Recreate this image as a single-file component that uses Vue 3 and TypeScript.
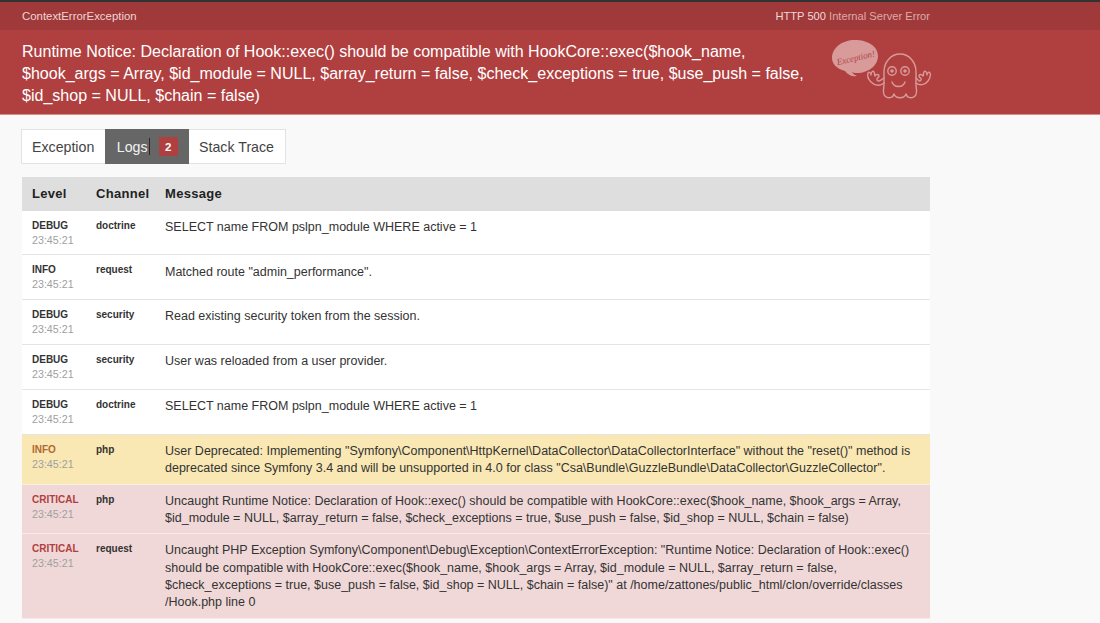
<script setup lang="ts">
interface LogRow {
  level: string
  time: string
  channel: string
  message: string[]
  kind: string
  height: number
}
const tabs = [
  { label: 'Exception', active: false, badge: '' },
  { label: 'Logs', active: true, badge: '2' },
  { label: 'Stack Trace', active: false, badge: '' },
]
const rows: LogRow[] = [
  { level: 'DEBUG', time: '23:45:21', channel: 'doctrine', message: ['SELECT name FROM pslpn_module WHERE active = 1'], kind: '', height: 44.8 },
  { level: 'INFO', time: '23:45:21', channel: 'request', message: ['Matched route "admin_performance".'], kind: '', height: 44.8 },
  { level: 'DEBUG', time: '23:45:21', channel: 'security', message: ['Read existing security token from the session.'], kind: '', height: 44.8 },
  { level: 'DEBUG', time: '23:45:21', channel: 'security', message: ['User was reloaded from a user provider.'], kind: '', height: 44.8 },
  { level: 'DEBUG', time: '23:45:21', channel: 'doctrine', message: ['SELECT name FROM pslpn_module WHERE active = 1'], kind: '', height: 44.8 },
  { level: 'INFO', time: '23:45:21', channel: 'php', message: ['User Deprecated: Implementing "Symfony\\Component\\HttpKernel\\DataCollector\\DataCollectorInterface" without the "reset()" method is', 'deprecated since Symfony 3.4 and will be unsupported in 4.0 for class "Csa\\Bundle\\GuzzleBundle\\DataCollector\\GuzzleCollector".'], kind: 'warn', height: 50 },
  { level: 'CRITICAL', time: '23:45:21', channel: 'php', message: ['Uncaught Runtime Notice: Declaration of Hook::exec() should be compatible with HookCore::exec($hook_name, $hook_args = Array,', '$id_module = NULL, $array_return = false, $check_exceptions = true, $use_push = false, $id_shop = NULL, $chain = false)'], kind: 'crit', height: 49.5 },
  { level: 'CRITICAL', time: '23:45:21', channel: 'request', message: ['Uncaught PHP Exception Symfony\\Component\\Debug\\Exception\\ContextErrorException: "Runtime Notice: Declaration of Hook::exec()', 'should be compatible with HookCore::exec($hook_name, $hook_args = Array, $id_module = NULL, $array_return = false,', '$check_exceptions = true, $use_push = false, $id_shop = NULL, $chain = false)" at /home/zattones/public_html/clon/override/classes', '/Hook.php line 0'], kind: 'crit', height: 85 },
]
</script>

<template>
  <div class="page">
    <div class="topbar">
      <span>ContextErrorException</span>
      <span class="status"><b>HTTP 500</b> Internal Server Error</span>
    </div>
    <header class="hero">
      <h1>Runtime Notice: Declaration of Hook::exec() should be compatible with HookCore::exec($hook_name,<br>$hook_args = Array, $id_module = NULL, $array_return = false, $check_exceptions = true, $use_push = false,<br>$id_shop = NULL, $chain = false)</h1>
      <svg class="ghost" width="102" height="62" viewBox="0 0 102 62" fill="none">
        <path d="M2 19C2 9 12 1 25 1c12 0 23 6 23 16 0 9-9 17-21 17-2 0-3 0-5-1 1 2 3 3 5 4-5 1-9-1-12-5C7 30 2 25 2 19Z" fill="#d99a9a"/>
        <text x="6" y="22" transform="rotate(-13 25 18)" font-family="Liberation Serif, serif" font-style="italic" font-size="9" fill="#b04646">Exception!</text>
        <g stroke="#d99a9a" stroke-width="1.4" stroke-linecap="round" stroke-linejoin="round">
          <path d="M54 45V33C54 23 61 15 70 15S86 23 86 33V45C86 50 88 54 85 57C82 60 77 59 76 55C74 60 66 60 64 55C63 59 58 60 55 57C52 54 54 50 54 45Z"/>
          <path d="M54 44C50 47 45 47 41 43C38 40 37 37 38 34C39 32 41 34 41 36C41 33 43 31 44 33C45 34 44 36 45 37C46 35 49 35 49 37C49 39 46 39 47 41C48 43 50 42 54 39"/>
          <path d="M86 44C90 47 95 46 98 42C100 39 101 36 100 34C99 32 97 34 97 36C97 33 95 31 94 33C93 34 94 36 93 37C92 35 89 35 89 37C89 39 92 39 91 41C90 43 89 42 86 39"/>
          <circle cx="62" cy="32" r="4.2"/>
          <circle cx="75" cy="32" r="4.2"/>
          <path d="M62 43C64 49 73 49 75 43"/>
        </g>
        <circle cx="62" cy="32" r="1.8" fill="#d99a9a"/>
        <circle cx="75" cy="32" r="1.8" fill="#d99a9a"/>
      </svg>
    </header>
    <main class="content">
      <nav class="tabs">
        <div v-for="tab in tabs" :key="tab.label" class="tab" :class="{ active: tab.active }">
          {{ tab.label }}<span v-if="tab.active" class="caret"></span><span v-if="tab.badge" class="badge">{{ tab.badge }}</span>
        </div>
      </nav>
      <div class="table">
        <div class="row head">
          <div class="c1">Level</div>
          <div class="c2">Channel</div>
          <div class="c3">Message</div>
        </div>
        <div
          v-for="(row, i) in rows"
          :key="i"
          class="row"
          :class="row.kind"
          :style="{ height: row.height + 'px' }"
        >
          <div class="c1 cell">
            <div class="level">{{ row.level }}</div>
            <div class="time">{{ row.time }}</div>
          </div>
          <div class="c2 channel">{{ row.channel }}</div>
          <div class="c3 msg">
            <div v-for="(line, j) in row.message" :key="j">{{ line }}</div>
          </div>
        </div>
      </div>
    </main>
  </div>
</template>

<style>
html, body { margin: 0; background: #f9f9f9; }
</style>

<style scoped>
.page {
  width: 1100px;
  height: 623px;
  overflow: hidden;
  background: #f9f9f9;
  font-family: "Liberation Sans", Arial, sans-serif;
  color: #222;
}
.topbar {
  box-sizing: border-box;
  height: 30px;
  border-top: 2px solid #333;
  background: #a03a3a;
  color: #f0d4d4;
  font-size: 11.4px;
  display: flex;
  justify-content: space-between;
  align-items: center;
  padding: 0 170px 0 22px;
}
.status { color: #dfa9a9; font-size: 11.15px; }
.status b { font-weight: 400; color: #f0d8d8; }
.hero {
  box-sizing: border-box;
  height: 85px;
  background: #b03f3f;
  color: #fff;
  padding: 10px 22px 0;
  position: relative;
  border-bottom: 1px solid #d98d8d;
}
h1 {
  margin: 0;
  font-size: 16.05px;
  font-weight: 400;
  line-height: 22px;
  white-space: nowrap;
}
.ghost { position: absolute; left: 830px; top: 9px; }
.content { padding: 14px 0 0 21px; }
.tabs {
  display: inline-flex;
  vertical-align: top;
  border: 1px solid #e3e3e3;
  background: #fff;
  height: 33px;
}
.tab {
  display: flex;
  align-items: center;
  padding: 0 10.5px 0 10px;
  font-size: 14.2px;
  color: #444;
}
.tab:last-child { padding: 0 11px 0 10.5px; }
.tab.active { background: #666; color: #f2f2f2; margin: -1px 0; padding: 0 11px 0 12px; }
.caret { width: 1px; height: 17px; background: #2a2a2a; margin-left: 1px; }
.badge {
  margin-left: 9px;
  width: 19px;
  height: 19px;
  background: #b03f3f;
  color: #fff;
  font-size: 11.5px;
  font-weight: 700;
  display: flex;
  align-items: center;
  justify-content: center;
}
.table { margin: 13px 0 0 1px; width: 908px; }
.row {
  box-sizing: border-box;
  display: flex;
  background: #fff;
  border-bottom: 1px solid #e4e4e4;
  font-size: 12.5px;
  line-height: 17.35px;
}
.row.head {
  height: 33.6px;
  background: #dedede;
  font-size: 13px;
  font-weight: 700;
  align-items: center;
  color: #222;
  border-bottom: 0;
  letter-spacing: 0.3px;
}
.row.warn { background: #f9e8b4; border-bottom-color: #f5f0e2; }
.row.crit { background: #f0d8d8; border-bottom-color: #f6eaea; }
.c1 { width: 64px; padding-left: 10px; box-sizing: border-box; flex: none; }
.c2 { width: 69px; padding-left: 10px; box-sizing: border-box; flex: none; }
.c3 { flex: 1; padding-left: 10px; }
.cell { padding-top: 7px; }
.level, .channel { font-size: 10px; font-weight: 700; color: #333; }
.channel { line-height: 15px; padding-top: 7px; }
.level { line-height: 15px; }
.time { font-size: 10.7px; line-height: 15px; color: #a0a0a0; }
.msg { padding-top: 8.2px; white-space: nowrap; color: #333; }
.warn .level { color: #b0682f; }
.crit .level { color: #b03f3f; }
</style>
